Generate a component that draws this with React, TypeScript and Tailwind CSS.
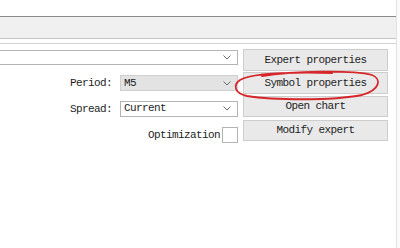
import React from "react";

const font = { fontFamily: '"Liberation Mono", "Noto Sans CJK SC", monospace' };

const Chevron = () => (
  <svg width="8" height="5" viewBox="0 0 8 5" className="shrink-0">
    <polyline points="0.5,0.5 4,4 7.5,0.5" fill="none" stroke="#6b6b6b" strokeWidth="1" />
  </svg>
);

const Select: React.FC<{ value?: string; disabled?: boolean; className?: string }> = ({ value, disabled, className }) => (
  <div
    className={`flex items-center justify-between pl-[3px] pr-[6px] border ${
      disabled ? "bg-[#e3e3e3] border-[#cfcfcf]" : "bg-white border-[#b4b4b4]"
    } ${className ?? ""}`}
  >
    <span className="text-[11px] tracking-[-0.6px] text-[#1e1e1e] leading-none">{value}</span>
    <Chevron />
  </div>
);

const Button: React.FC<{ label: string; className?: string }> = ({ label, className }) => (
  <div
    className={`flex items-center justify-center bg-[#e9e9e9] border border-[#cdcdcd] text-[11px] tracking-[-0.6px] text-[#1e1e1e] ${className ?? ""}`}
  >
    {label}
  </div>
);

export default function App() {
  return (
    <div className="w-[400px] h-[248px] bg-white flex overflow-hidden relative" style={font}>
      <div className="w-[396px] flex flex-col">
        <div className="h-[16px]" />
        <div className="h-[23px] bg-[#f0f0f0] border-t border-[#8a8a8a] border-b border-b-[#c4c4c4]" />
        <div className="h-[4px]" />
        <div className="border-t border-[#d2d2d2] flex gap-[5px]">
          <div className="w-[238px] flex flex-col">
            <Select className="mt-[6px] h-[15px] border-l-0" />
            <div className="flex items-center justify-end gap-[8px] mt-[10px]">
              <span className="text-[11px] tracking-[-0.6px] text-[#1e1e1e]">Period:</span>
              <Select value="M5" disabled className="w-[118px] h-[16px]" />
            </div>
            <div className="flex items-center justify-end gap-[8px] mt-[9px]">
              <span className="text-[11px] tracking-[-0.6px] text-[#1e1e1e]">Spread:</span>
              <Select value="Current" className="w-[118px] h-[16px]" />
            </div>
            <div className="flex items-center justify-end gap-[2px] mt-[10px]">
              <span className="text-[11px] tracking-[-0.6px] text-[#1e1e1e]">Optimization</span>
              <div className="w-[16px] h-[16px] bg-white border border-[#b4b4b4]" />
            </div>
          </div>
          <div className="w-[145px] flex flex-col">
            <Button label="Expert properties" className="mt-[5px] h-[22px]" />
            <Button label="Symbol properties" className="mt-[1px] h-[22px]" />
            <Button label="Open chart" className="mt-[2px] h-[21px]" />
            <Button label="Modify expert" className="mt-[3px] h-[21px]" />
          </div>
        </div>
      </div>
      <div className="flex-1 border-l border-[#e2e2e2] bg-[#fbfbfb]" />
      <svg
        className="absolute left-[232px] top-[70px] pointer-events-none"
        width="150"
        height="32"
        viewBox="0 0 150 32"
      >
        <path
          d="M 30 6 C 60 1, 120 0, 140 5 C 150 9, 148 20, 130 25 C 100 31, 40 30, 15 26 C 2 23, 1 15, 8 10 C 20 3, 60 2, 100 3"
          fill="none"
          stroke="#d7262a"
          strokeWidth="1.8"
          strokeLinecap="round"
        />
      </svg>
    </div>
  );
}
